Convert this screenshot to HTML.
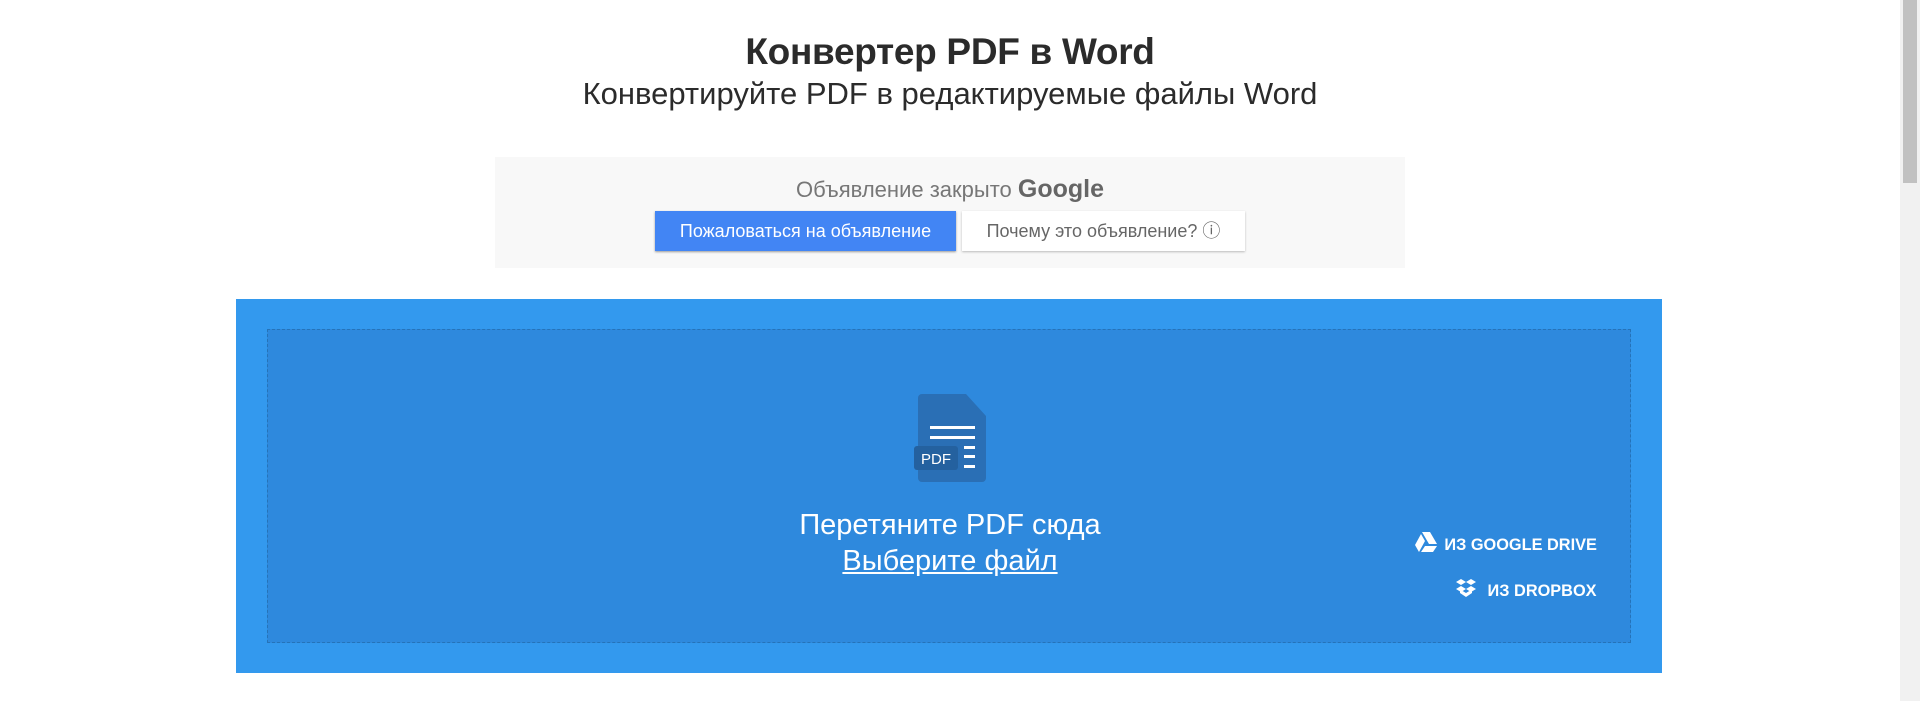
<!DOCTYPE html>
<html><head><meta charset="utf-8"><style>
body{margin:0;width:1920px;height:701px;background:#fff;font-family:"Liberation Sans",sans-serif;position:relative;overflow:hidden}
.a{position:absolute}
h1{position:absolute;left:0;width:1900px;top:31px;margin:0;text-align:center;font-size:37px;font-weight:bold;color:#2b2b2b;letter-spacing:-0.3px}
h2{position:absolute;left:0;width:1900px;top:76px;margin:0;text-align:center;font-size:31px;font-weight:normal;color:#2b2b2b}
.lk{position:absolute;right:323px;font-size:17px;font-weight:bold;color:#fff;transform:scaleX(.96);transform-origin:right;white-space:nowrap}
</style></head><body>
<h1>Конвертер PDF в Word</h1>
<h2>Конвертируйте PDF в редактируемые файлы Word</h2>
<div class="a" style="left:495px;top:157px;width:910px;height:111px;background:#f8f8f8"></div>
<div class="a" style="left:495px;top:175px;width:910px;text-align:center;font-size:22px;color:#777">Объявление закрыто <b style="color:#666;font-size:25px">Google</b></div>
<div class="a" style="left:655px;top:211px;width:301px;height:40px;background:#4285f4;color:#fff;font-size:18px;line-height:40px;text-align:center;box-shadow:0 1px 2px #999">Пожаловаться на объявление</div>
<div class="a" style="left:962px;top:211px;width:283px;height:40px;background:#fff;color:#666;font-size:18px;line-height:40px;text-align:center;box-shadow:0 1px 2px #bbb">Почему это объявление? ⓘ</div>
<div class="a" style="left:236px;top:299px;width:1426px;height:374px;background:#3399ee"></div>
<div class="a" style="left:267px;top:329px;width:1362px;height:312px;background:#2e89dd;border:1px dashed #2573b8"></div>
<svg class="a" style="left:914px;top:392px" width="76" height="92" viewBox="0 0 76 92">
<path d="M8 2h44l20 22v62a4 4 0 0 1-4 4H8a4 4 0 0 1-4-4V6a4 4 0 0 1 4-4z" fill="#2a6fb5"/>
<rect x="16" y="34" width="45" height="3" fill="#fff"/><rect x="16" y="44" width="45" height="3" fill="#fff"/>
<rect x="50" y="54" width="11" height="3" fill="#fff"/><rect x="50" y="63" width="11" height="3" fill="#fff"/><rect x="50" y="73" width="11" height="3" fill="#fff"/>
<rect x="0" y="54" width="44" height="24" rx="3" fill="#24619f"/>
<text x="22" y="72" fill="#fff" font-size="15" font-family="Liberation Sans" text-anchor="middle">PDF</text>
</svg>
<div class="a" style="left:700px;top:509px;width:500px;text-align:center;font-size:29px;color:#fff">Перетяните PDF сюда</div>
<div class="a" style="left:700px;top:545px;width:500px;text-align:center;font-size:29px;color:#fff;text-decoration:underline">Выберите файл</div>
<svg class="a" style="left:1415px;top:532px" width="22" height="20" viewBox="0 0 22 20"><path d="M7 0h8l7 12h-8zM6 2l4 7-6 11-4-7zM10 14h12l-4 6H6z" fill="#fff"/></svg>
<div class="lk" style="top:535px">ИЗ GOOGLE DRIVE</div>
<svg class="a" style="left:1455px;top:578px" width="22" height="22" viewBox="0 0 22 22"><path d="M6 1l5 3-5 3-5-3zM16 1l5 3-5 3-5-3zM6 8l5 3-5 3-5-3zM16 8l5 3-5 3-5-3zM11 15l5-3 1 1v2l-6 4-6-4v-2l1-1z" fill="#fff"/></svg>
<div class="lk" style="top:581px">ИЗ DROPBOX</div>
<div class="a" style="left:1900px;top:0;width:20px;height:701px;background:#f1f1f1"></div>
<div class="a" style="left:1903px;top:0;width:14px;height:183px;background:#c1c1c1"></div>
</body></html>
